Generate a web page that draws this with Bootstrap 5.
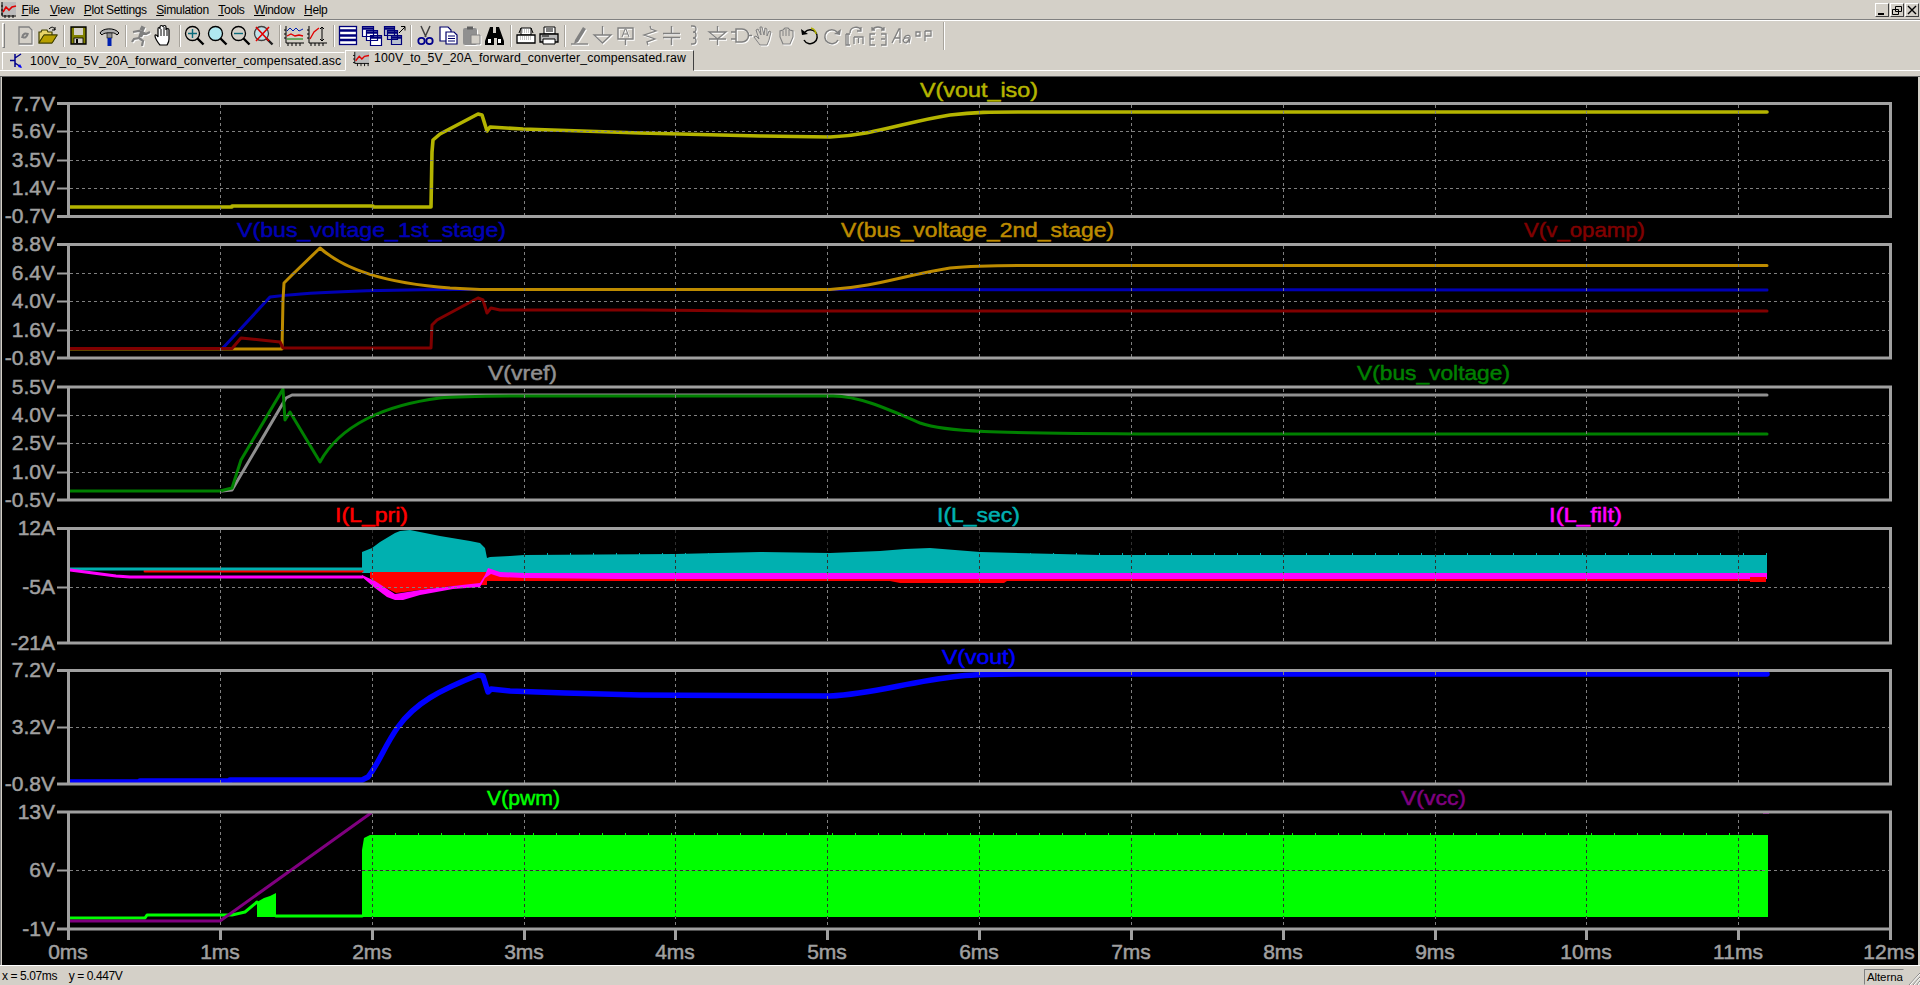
<!DOCTYPE html>
<html lang="en">
<head>
<meta charset="utf-8">
<title>LTspice</title>
<link rel="stylesheet" href="https://cdn.jsdelivr.net/npm/bootstrap@5.3.0/dist/css/bootstrap.min.css">
<style>
html,body{height:100%;overflow:hidden;background:#d4d0c8;font-family:"Liberation Sans",Arial,sans-serif;color:#000}
.lt-shell{height:985px}
.lt-menu{height:21px;border-bottom:1px solid #fff;box-shadow:inset 0 -1px 0 #808080;padding-left:0;font-size:12px;align-items:center;gap:9.5px;letter-spacing:-.35px;flex-wrap:nowrap}
.lt-menu .nav-link{padding:0;color:#000}
.lt-menu .nav-link.lt-first{margin-right:1px}
.lt-appicon{width:17px;height:17px;margin:0 -5px 0 0;flex:none}
.lt-winbtns{margin-left:auto;gap:1px;padding-right:1px;margin-top:-1px}
.lt-winbtn{width:14px;height:14px;background:#d4d0c8;border:1px solid;border-color:#fff #404040 #404040 #fff;display:block}
.lt-tools{height:29px;padding-left:2px;align-items:center;flex-wrap:nowrap}
.lt-grip{width:3px;height:25px;border:1px solid;border-color:#fff #808080 #808080 #fff;margin-right:8px}
.lt-ico{width:23px;height:23px;flex:none;display:block}
.lt-sep{width:1px;height:22px;background:#a8a49c;box-shadow:1px 0 0 #fff;flex:none;margin:0 3.5px}
.lt-sep-end{margin-left:7px;height:28px}
.dis{filter:drop-shadow(1px 1px 0 #fff)}
.lt-tabs{height:21px;border-bottom:1px solid #fff;padding-left:2px;font-size:12.3px;letter-spacing:.12px;flex-wrap:nowrap;align-items:flex-end}
.lt-tab{height:18px;width:343px;display:flex;align-items:center;gap:4px;padding-left:2px;color:#000;border:1px solid;border-color:#fff #d4d0c8 transparent #fff;white-space:nowrap;overflow:hidden}
.lt-tab.on{height:21px;width:349px;border-color:#fff #404040 #d4d0c8 #fff;margin-bottom:-1px;background:#d4d0c8;padding-bottom:4px}
.lt-gap{height:6px;border-bottom:1px solid #606060}
.lt-plotwrap{height:888px;padding-left:2px;padding-right:2px;background:#d4d0c8;box-shadow:inset 1px 0 0 #808080}
.lt-plot{display:block;width:1916px;height:888px;background:#000;font-family:"Liberation Sans",Arial,sans-serif}
.lt-plot text{font-size:21px;stroke-width:.5px}
.ya text{text-anchor:end;fill:#a0a0a0;stroke:#a0a0a0}
.xa text{text-anchor:middle;fill:#a0a0a0;stroke:#a0a0a0;font-size:21px}
.grid{fill:none;stroke:#808080;stroke-width:1;stroke-dasharray:3 3;shape-rendering:crispEdges}
.griddark{fill:none;stroke:#303030;stroke-width:1;stroke-dasharray:3 3;shape-rendering:crispEdges}
.tr{fill:none;stroke-width:3;stroke-linejoin:round;stroke-linecap:round}
.tr-y{stroke-width:3.6}
.tr-b{stroke-width:5.5}
.tr-teeth{fill:none;stroke-width:2;stroke-dasharray:1 22}
.lt-status{height:20px;border-top:1px solid #fff;margin-top:0;font-size:12px;letter-spacing:-.4px;white-space:pre;align-items:center;padding-left:2px;position:relative}
.lt-pane{width:40px;height:16px;margin-left:auto;margin-right:16px;margin-top:3px;border:1px solid;border-color:#808080 #d4d0c8 #d4d0c8 #808080;line-height:15px;padding-left:2px;overflow:hidden;font-size:11.5px;letter-spacing:-.1px}
.lt-resize{position:absolute;right:0;bottom:0;width:12px;height:14px}
</style>
</head>
<body>
<div class="lt-shell d-flex flex-column">

<nav class="nav lt-menu d-flex">
 <svg class="lt-appicon" viewBox="0 0 17 17"><rect x="2" y="0" width="14" height="13" fill="#bbb"/><path d="M2 0v14h14M1 4h2M1 8h2M1 12h2M5 13v3M9 13v3M13 13v3" stroke="#000" fill="none"/><path d="M3 10l3-5 3 3 3-3 4-1" stroke="#e00000" stroke-width="1.6" fill="none"/></svg>
 <a class="nav-link lt-first" href="#"><u>F</u>ile</a>
 <a class="nav-link" href="#"><u>V</u>iew</a>
 <a class="nav-link" href="#"><u>P</u>lot Settings</a>
 <a class="nav-link" href="#"><u>S</u>imulation</a>
 <a class="nav-link" href="#"><u>T</u>ools</a>
 <a class="nav-link" href="#"><u>W</u>indow</a>
 <a class="nav-link" href="#"><u>H</u>elp</a>
 <div class="d-flex lt-winbtns">
  <span class="lt-winbtn"><svg viewBox="0 0 12 12" width="12" height="12" class="d-block"><path d="M2 10h6" stroke="#000" stroke-width="2"/></svg></span>
  <span class="lt-winbtn"><svg viewBox="0 0 12 12" width="12" height="12" class="d-block"><path d="M4.5 2.5h6v5h-6zM1.5 5.5h6v5h-6z" stroke="#000" fill="#d4d0c8"/></svg></span>
  <span class="lt-winbtn"><svg viewBox="0 0 12 12" width="12" height="12" class="d-block"><path d="M2 2l8 8M10 2l-8 8" stroke="#000" stroke-width="1.4"/></svg></span>
 </div>
</nav>

<div class="btn-toolbar lt-tools" role="toolbar">
 <span class="lt-grip"></span>
 <svg class="lt-ico" viewBox="0 0 23 23"><path class="dis" d="M6 3h10l3 3v14H6z" fill="#d4d0c8" stroke="#808080" stroke-width="1.3"/><path d="M9 14c1-5 4-5 5-4M15 9c-1 5-4 5-5 4" stroke="#808080" stroke-width="2" fill="none"/></svg>
 <svg class="lt-ico" viewBox="0 0 23 23"><path d="M3 19V8h2l1-2h5l1 2h4v3H8L3 19h13l5-8H8" fill="#e8d468" stroke="#404000" stroke-width="1.2"/><path d="M3 19l5-8h13l-5 8z" fill="#b8a000" stroke="#404000"/><path d="M13 5c3-3 5-2 6 1M19 3v3h-3" stroke="#000" fill="none"/></svg>
 <span class="lt-sep"></span>
 <svg class="lt-ico" viewBox="0 0 23 23"><path d="M4 3h15v17H4z" fill="#808000" stroke="#000" stroke-width="1.3"/><rect x="7" y="4" width="9" height="7" fill="#d4d0c8"/><rect x="7" y="14" width="9" height="5.5" fill="#d4d0c8" stroke="#000" stroke-width=".8"/><rect x="9" y="15" width="2" height="4" fill="#000"/></svg>
 <span class="lt-sep"></span>
 <svg class="lt-ico" viewBox="0 0 23 23"><path d="M2 9c2-5 15-6 19 0l-2 2c-3-3-5-2-6-2H9C6 9 5 10 4 11z" fill="#b0b0b0" stroke="#000"/><rect x="9" y="9" width="5" height="5" fill="#909090" stroke="#000" stroke-width=".6"/><rect x="9.5" y="14" width="4" height="8" fill="#0020b0"/></svg>
 <span class="lt-sep"></span>
 <svg class="lt-ico dis" viewBox="0 0 23 23"><path d="M13 3l2 1-1 2-2-1zM4 8l6-1 3 1 4 2 4-2M12 8l-2 6-5 1-2 3M10 14l4 3-1 5M14 9l-2 4" stroke="#808080" stroke-width="2.2" fill="none"/></svg>
 <svg class="lt-ico" viewBox="0 0 23 23"><path d="M8 21c-2-2-5-7-5-9s2-1 3 1V5c0-2 2-2 2 0V3c0-2 3-2 3 0v0c0-2 3-2 3 0v3c0-2 3-2 3 0v9c0 3-1 4-2 6z" fill="#fff" stroke="#000" stroke-width="1.2"/><path d="M9 5v7M12 3v9M15 5v7" stroke="#000"/></svg>
 <span class="lt-sep"></span>
 <svg class="lt-ico" viewBox="0 0 23 23"><circle cx="9.5" cy="9.5" r="7" fill="none" stroke="#000" stroke-width="1.3"/><path d="M5 9.5h9M9.5 5v9" stroke="#0a6a7a" stroke-width="1.4"/><path d="M14.5 14.5l6 6" stroke="#000" stroke-width="2.4"/></svg>
 <svg class="lt-ico" viewBox="0 0 23 23"><circle cx="9.5" cy="9.5" r="7" fill="#b0e8f0" stroke="#000" stroke-width="1.3"/><path d="M14.5 14.5l6 6" stroke="#000" stroke-width="2.4"/></svg>
 <svg class="lt-ico" viewBox="0 0 23 23"><circle cx="9.5" cy="9.5" r="7" fill="none" stroke="#000" stroke-width="1.3"/><path d="M5 9.5h9" stroke="#0a6a7a" stroke-width="1.4"/><path d="M14.5 14.5l6 6" stroke="#000" stroke-width="2.4"/></svg>
 <svg class="lt-ico" viewBox="0 0 23 23"><circle cx="9.5" cy="9.5" r="7" fill="#c0e0e8" stroke="#404040" stroke-width="1.3"/><path d="M14.5 14.5l6 6" stroke="#202020" stroke-width="2.4"/><path d="M4 3l13 14M17 3L4 17" stroke="#e00000" stroke-width="1.6"/></svg>
 <span class="lt-sep"></span>
 <svg class="lt-ico" viewBox="0 0 23 23"><path d="M3 2v17h18M1 6h2M1 10h2M1 14h2M5 19v3M9 19v3M13 19v3M17 19v3" stroke="#000" fill="none"/><path d="M4 7l3-3 3 3 3-3 3 3 4-2" stroke="#0020b0" fill="none"/><path d="M4 12l4-2 4 2 4-1 4 1" stroke="#e00000" stroke-width="1.3" fill="none"/><path d="M4 15h16" stroke="#008000"/></svg>
 <svg class="lt-ico" viewBox="0 0 23 23"><path d="M3 2v17h18M1 6h2M1 10h2M1 14h2M5 19v3M9 19v3M13 19v3M17 19v3" stroke="#000" fill="none"/><path d="M4 15l4-7 5-4" stroke="#e00000" stroke-width="1.3" fill="none"/><path d="M16 3v14M14 5l2-2 2 2M14 15l2 2 2-2" stroke="#000" fill="none"/></svg>
 <span class="lt-sep"></span>
 <svg class="lt-ico" viewBox="0 0 23 23"><rect x="2.5" y="2.5" width="17" height="18" fill="#fff" stroke="#00007a" stroke-width="1.3"/><path d="M2 6.5h18M2 11.5h18M2 16h18" stroke="#00007a" stroke-width="2.6"/></svg>
 <svg class="lt-ico" viewBox="0 0 23 23"><path d="M2.5 2.5h11v10h-11zM6.5 6.5h11v10h-11zM10.5 11.5h11v10h-11z" fill="#fff" stroke="#00007a" stroke-width="1.2"/><path d="M2 4.5h12M6 8.5h12M10 13.5h12" stroke="#00007a" stroke-width="2.4"/></svg>
 <svg class="lt-ico" viewBox="0 0 23 23"><path d="M1.5 2.5h10v9h-10zM4.5 6.5h10v9h-10zM8.5 11.5h10v9h-10z" fill="#b8c0d0" stroke="#00007a" stroke-width="1.2"/><path d="M1 4.5h11M4 8.5h11M8 13.5h11" stroke="#00007a" stroke-width="2.4"/><path d="M16 9l6-6M18 2.5h4v4" stroke="#000" fill="none"/></svg>
 <span class="lt-sep"></span>
 <svg class="lt-ico" viewBox="0 0 23 23"><path d="M7 2l5 11M16 2l-5 11" stroke="#404040" stroke-width="1.5"/><circle cx="7.5" cy="17" r="3.2" fill="none" stroke="#00008a" stroke-width="1.8"/><circle cx="15.5" cy="17" r="3.2" fill="none" stroke="#00008a" stroke-width="1.8"/></svg>
 <svg class="lt-ico" viewBox="0 0 23 23"><path d="M3 3h8l3 3v11H3z" fill="#fff" stroke="#00006a" stroke-width="1.2"/><path d="M9 8h8l3 3v9H9z" fill="#fff" stroke="#00006a" stroke-width="1.2"/><path d="M11 12h7M11 14.5h7M11 17h7" stroke="#00006a"/></svg>
 <svg class="lt-ico dis" viewBox="0 0 23 23"><rect x="3" y="4" width="14" height="17" rx="2" fill="#909090"/><rect x="7" y="2.5" width="6" height="3" fill="#606060"/><path d="M11 11h9v9h-9z" fill="#d4d0c8" stroke="#808080"/></svg>
 <svg class="lt-ico" viewBox="0 0 23 23"><path d="M7 3h3v6h3V3h3l5 14v4h-7v-7h-3v7H2v-4z" fill="#000"/><path d="M5 15h3v4H5zM15 15h3v4h-3z" fill="#fff"/></svg>
 <span class="lt-sep"></span>
 <svg class="lt-ico" viewBox="0 0 23 23"><path d="M7 4h10v7H7z" fill="#fff" stroke="#000"/><path d="M3 11h18v8H3z" fill="#fff" stroke="#000" stroke-width="1.3"/><path d="M5 9l2-5M19 9l-2-5" stroke="#000"/><path d="M8 6h8M8 8h8M6 13h12M6 15h12" stroke="#909090" stroke-dasharray="1 1"/></svg>
 <svg class="lt-ico" viewBox="0 0 23 23"><path d="M7 3h11v7H7z" fill="#fff" stroke="#000"/><path d="M3 10h18v8H3z" fill="#b8b8b8" stroke="#000" stroke-width="1.3"/><path d="M6 15h12v5H6z" fill="#fff" stroke="#000"/><path d="M9 5h7M9 7h7" stroke="#000"/><path d="M5 12h7" stroke="#000"/></svg>
 <span class="lt-sep"></span>
 <svg class="lt-ico dis" viewBox="0 0 23 23"><path d="M7 16L15 3l3 2-8 13-4 2z" fill="#808080"/><path d="M3 20h17" stroke="#808080" stroke-width="1.4"/></svg>
 <svg class="lt-ico dis" viewBox="0 0 23 23"><path d="M11.5 2v9M3 11h17l-8.5 8z" fill="none" stroke="#808080" stroke-width="1.3"/></svg>
 <svg class="lt-ico dis" viewBox="0 0 23 23"><path d="M4 4h15v11H4zM11.5 15v6" fill="none" stroke="#808080" stroke-width="1.4"/><path d="M8 13l3-8h1l3 8M9 10h5" fill="none" stroke="#808080"/></svg>
 <svg class="lt-ico dis" viewBox="0 0 23 23"><path d="M13 2l1 3 5 2-12 4 11 4-8 3 1 3" fill="none" stroke="#808080" stroke-width="1.3"/></svg>
 <svg class="lt-ico dis" viewBox="0 0 23 23"><path d="M11.5 2v7M3 9.5h17M3 13.5h17M11.5 14v7" fill="none" stroke="#808080" stroke-width="1.4"/></svg>
 <svg class="lt-ico dis" viewBox="0 0 23 23"><path d="M8 2h2c4 0 4 6 0 6 4 0 4 6 0 6 4 0 4 6 0 6H8" fill="none" stroke="#808080" stroke-width="1.3"/></svg>
 <svg class="lt-ico dis" viewBox="0 0 23 23"><path d="M11.5 2v6M3 8h17l-8.5 7zM3 15h17M11.5 15v6" fill="none" stroke="#808080" stroke-width="1.3"/></svg>
 <svg class="lt-ico dis" viewBox="0 0 23 23"><path d="M7 5h6a6 6 0 010 13H7zM2 8h5M2 15h5M19 11.5h4" fill="none" stroke="#808080" stroke-width="1.5"/></svg>
 <svg class="lt-ico dis" viewBox="0 0 23 23"><path d="M8 21l-6-8 2-1 3 3-3-9 2-1 3 6-1-8h2l2 8 1-7 2 1v7l2-5 2 1-2 8-2 5z" fill="#d4d0c8" stroke="#808080"/></svg>
 <svg class="lt-ico dis" viewBox="0 0 23 23"><path d="M8 20l-3-7V7l3-1 2-2h3l2 2 3 1v6l-3 7z" fill="#d4d0c8" stroke="#808080" stroke-width="1.1"/><path d="M8 7v5M11 5v7M14 6v6" stroke="#808080"/></svg>
 <svg class="lt-ico" viewBox="0 0 23 23"><path d="M7 8a7 7 0 11-1 8" fill="none" stroke="#000" stroke-width="1.5"/><path d="M3 5l1 6 6-1z" fill="#000"/><path d="M13 4a7 7 0 015 6" stroke="#b0b000" fill="none" stroke-width="1.5"/></svg>
 <svg class="lt-ico dis" viewBox="0 0 23 23"><path d="M16 8a7 7 0 101 8" fill="none" stroke="#808080" stroke-width="1.5"/><path d="M20 5l-1 6-6-1z" fill="#808080"/></svg>
 <svg class="lt-ico dis" viewBox="0 0 23 23"><path d="M6 9c0-7 9-7 11-3M17 3v4h-4M2 10h4M2 10v11h4M4 10v11M10 13v7M10 13h9v7M14.5 14v5" fill="none" stroke="#808080" stroke-width="1.3"/></svg>
 <svg class="lt-ico dis" viewBox="0 0 23 23"><path d="M5 6c3-4 9-4 12 0M5 3v3h3M17 3v3h-3M8 10H3v11h5M3 15h4M14 10h5v11h-5M18 15h-4" fill="none" stroke="#808080" stroke-width="1.3"/></svg>
 <svg class="lt-ico dis" viewBox="0 0 23 23"><path d="M2 19l7-14h1v14M5 14h5M14 14c2-4 7-3 6 0l-1 5M19 14c-5-1-7 2-5 4s4 0 5-3" fill="none" stroke="#808080" stroke-width="1.3"/></svg>
 <svg class="lt-ico dis" viewBox="0 0 23 23"><path d="M3 8h4v4H3zM12 7h6v5h-6M12 7v10" fill="none" stroke="#808080" stroke-width="1.3"/></svg>
 <span class="lt-sep lt-sep-end"></span>
</div>

<div class="nav lt-tabs d-flex">
 <a class="lt-tab text-decoration-none" href="#"><svg width="21" height="16" viewBox="0 0 21 16" class="flex-shrink-0"><path d="M10 1v13M5 7.5h5M10 5l6-4M10 10l6 4" stroke="#00008a" stroke-width="1.5" fill="none"/><path d="M17 15l-4-1 2-3z" fill="#0000ff"/></svg>100V_to_5V_20A_forward_converter_compensated.asc</a>
 <a class="lt-tab on text-decoration-none" href="#"><svg width="18" height="16" viewBox="0 0 20 18" class="ms-1 flex-shrink-0"><rect x="3" y="1" width="16" height="13" fill="#bbb"/><path d="M3 1v13h16M1 5h2M1 9h2M1 13h2M6 14v3M10 14v3M14 14v3M18 14v3" stroke="#000" fill="none"/><path d="M4 11l4-5 3 3 3-3 5-1" stroke="#e00000" stroke-width="1.6" fill="none"/></svg><span>100V_to_5V_20A_forward_converter_compensated.raw</span></a>
</div>
<div class="lt-gap"></div>

<div class="lt-plotwrap">
<svg class="lt-plot" viewBox="2 77 1916 888" xmlns="http://www.w3.org/2000/svg">
 <defs>
  <path id="vg" d="M220.5 0V120M372.5 0V120M524.5 0V120M675.5 0V120M827.5 0V120M979.5 0V120M1131.5 0V120M1283.5 0V120M1435.5 0V120M1586.5 0V120M1738.5 0V120"/>
 </defs>

 <!-- traces -->
 <path class="tr tr-y" stroke="#b4b400" d="M70 207H232V206H373V207H431L432 152L433 140L440 134L478 114L482 115L487 131L490 127L523 129L640 133L760 136L830 137C875 135 905 122 950 115C975 112 990 112 1020 112H1767"/>

 <path class="tr" stroke="#0000b4" d="M222 349L270 297C300 293 350 290 456 289.5L1767 290"/>
 <path class="tr" stroke="#bd8b00" d="M70 349H282L283 300L284 283L293 274L320 248C345 270 385 283 450 288L480 289.5L830 289.5C875 287 905 275 950 268C975 265.5 990 265.5 1020 265.5H1767"/>
 <path class="tr" stroke="#800000" d="M70 348.5H222L232 348.5L241 338L280 342L283 348H431L432 325L437 320L478 298L483 300L487 313L491 308L500 310H640L760 311H1767"/>

 <path class="tr" stroke="#909090" d="M222 491L232 490L286 398L292 395H1767"/>
 <path class="tr" stroke="#008000" d="M70 491H220L232 488L241 460L283 389L285 420L290 412L320 462C340 425 385 405 440 398C460 396 490 396 529 396H833C860 396 890 410 920 423C945 432 985 433 1163 434H1767"/>

 <path fill="#00b0b0" d="M362 573V552L372 548L380 542L395 533L400 531L410 530L420 532L440 536L470 541L480 543L485 548L487 558L490 557L510 556L524 555L675 554L760 552L830 553L880 551L905 549L930 548L980 552L1100 555L1767 555V573Z"/>
 <path class="tr-teeth" stroke="#00b0b0" d="M524 554H1767"/>
 <path fill="#ff0000" d="M370 572H487V585L453 586L420 590L396 593L380 585L370 578ZM487 574H1765V581H487Z"/>
 <path fill="#ff0000" d="M880 579H1010L1004 583H900Z"/>
 <path fill="#ff00ff" d="M362 575L375 581L395 594L420 590L453 586L480 583L485 575L488 568L500 572L524 573H1767V579H620L524 578L500 577L491 574L485 578L480 587L453 589L420 595L403 600H395L387 597L375 588L362 577Z"/>
 <path fill="#ff0000" d="M1750 577h16v5h-16z"/>
 <path class="tr" stroke="#ff0000" d="M145 571H362"/>
 <path class="tr" stroke="#00b0b0" d="M70 569H362"/>
 <path class="tr" stroke="#ff00ff" d="M70 570L116 576L130 577H362"/>

 <path class="tr tr-b" stroke="#0000ff" d="M70 782H140V781H230V780H362L368 777C378 765 385 745 398 727C415 703 440 690 478 675L483 676L488 692L491 689L510 691L565 693L640 695L830 696C875 694 905 682 960 676C980 674 1000 674 1020 674H1767"/>

 <path fill="#00ff00" d="M362 917V850L364 838L370 835H1768V917Z"/>
 <path class="tr-teeth" stroke="#00ff00" d="M372 834H1766"/>
 <path class="tr" stroke="#00ff00" d="M70 918H145L147 915H232L245 912L257 902"/>
 <path fill="#00ff00" d="M257 917V902L264 898L270 896L276 893V917Z"/>
 <path class="tr" stroke="#00ff00" d="M276 916H362"/>
 <path class="tr" stroke="#800080" d="M70 921H220L371 813"/>
 <rect x="1763" y="811" width="6" height="3" fill="#800080"/>

 <!-- grid -->
 <svg x="0" y="105" width="1920" height="111"><use href="#vg" class="grid"/></svg>
 <svg x="0" y="246" width="1920" height="111"><use href="#vg" class="grid"/></svg>
 <svg x="0" y="389" width="1920" height="110"><use href="#vg" class="grid"/></svg>
 <svg x="0" y="530" width="1920" height="112"><use href="#vg" class="grid"/></svg>
 <svg x="0" y="672" width="1920" height="111"><use href="#vg" class="grid"/></svg>
 <svg x="0" y="814" width="1920" height="114"><use href="#vg" class="grid"/></svg>
 <path class="grid" d="M70 131.5H1889M70 160.5H1889M70 188.5H1889M70 273.5H1889M70 301.5H1889M70 330.5H1889M70 415.5H1889M70 443.5H1889M70 472.5H1889M70 587.5H1889M70 727.5H1889M70 870.5H1889"/>
 <svg x="362" y="834" width="1404" height="83"><use href="#vg" x="-362" y="-20" class="griddark"/></svg>
 <svg x="362" y="530" width="1404" height="43"><use href="#vg" x="-362" class="griddark"/></svg>
 <path class="griddark" d="M362 870.5H1762"/>

 <!-- frames -->
 <path fill="none" stroke="#a0a0a0" stroke-width="3" d="M57 103.5H1890.5V216.5H57M68.5 103.5V216.5M57 244.5H1890.5V358H57M68.5 244.5V358M57 387H1890.5V500H57M68.5 387V500M57 528.5H1890.5V643H57M68.5 528.5V643M57 670.5H1890.5V784H57M68.5 670.5V784M57 812H1890.5V929H57M68.5 812V929"/>
 <path fill="none" stroke="#a0a0a0" stroke-width="2" d="M57 131.5H68M57 160.5H68M57 188.5H68M57 273.5H68M57 301.5H68M57 330.5H68M57 415.5H68M57 443.5H68M57 472.5H68M57 587.5H68M57 727.5H68M57 870.5H68"/>
 <path fill="none" stroke="#a0a0a0" stroke-width="3" d="M68.5 929V940M220.5 929V940M372.5 929V940M524.5 929V940M675.5 929V940M827.5 929V940M979.5 929V940M1131.5 929V940M1283.5 929V940M1435.5 929V940M1586.5 929V940M1738.5 929V940M1890.5 929V940"/>

 <!-- y axis labels -->
 <g class="ya">
  <text x="55" y="111">7.7V</text><text x="55" y="138">5.6V</text><text x="55" y="167">3.5V</text><text x="55" y="195">1.4V</text><text x="55" y="223">-0.7V</text>
  <text x="55" y="251">8.8V</text><text x="55" y="280">6.4V</text><text x="55" y="308">4.0V</text><text x="55" y="337">1.6V</text><text x="55" y="365">-0.8V</text>
  <text x="55" y="394">5.5V</text><text x="55" y="422">4.0V</text><text x="55" y="450">2.5V</text><text x="55" y="479">1.0V</text><text x="55" y="507">-0.5V</text>
  <text x="55" y="535">12A</text><text x="55" y="594">-5A</text><text x="55" y="650">-21A</text>
  <text x="55" y="677">7.2V</text><text x="55" y="734">3.2V</text><text x="55" y="791">-0.8V</text>
  <text x="55" y="819">13V</text><text x="55" y="877">6V</text><text x="55" y="936">-1V</text>
 </g>
 <!-- x axis labels -->
 <g class="xa">
  <text x="68" y="959">0ms</text><text x="220" y="959">1ms</text><text x="372" y="959">2ms</text><text x="524" y="959">3ms</text><text x="675" y="959">4ms</text><text x="827" y="959">5ms</text><text x="979" y="959">6ms</text><text x="1131" y="959">7ms</text><text x="1283" y="959">8ms</text><text x="1435" y="959">9ms</text><text x="1586" y="959">10ms</text><text x="1738" y="959">11ms</text><text x="1889" y="959">12ms</text>
 </g>
 <!-- titles -->
 <text x="920" y="97" fill="#b4b400" stroke="#b4b400" textLength="118" lengthAdjust="spacingAndGlyphs">V(vout_iso)</text>
 <text x="237" y="237" fill="#0000b4" stroke="#0000b4" textLength="269" lengthAdjust="spacingAndGlyphs">V(bus_voltage_1st_stage)</text>
 <text x="841" y="237" fill="#bd8b00" stroke="#bd8b00" textLength="273" lengthAdjust="spacingAndGlyphs">V(bus_voltage_2nd_stage)</text>
 <text x="1524" y="237" fill="#800000" stroke="#800000" textLength="121" lengthAdjust="spacingAndGlyphs">V(v_opamp)</text>
 <text x="488" y="380" fill="#909090" stroke="#909090" textLength="69" lengthAdjust="spacingAndGlyphs">V(vref)</text>
 <text x="1357" y="380" fill="#008000" stroke="#008000" textLength="153" lengthAdjust="spacingAndGlyphs">V(bus_voltage)</text>
 <text x="335" y="522" fill="#ff0000" stroke="#ff0000" textLength="73" lengthAdjust="spacingAndGlyphs">I(L_pri)</text>
 <text x="937" y="522" fill="#00b0b0" stroke="#00b0b0" textLength="83" lengthAdjust="spacingAndGlyphs">I(L_sec)</text>
 <text x="1549" y="522" fill="#ff00ff" stroke="#ff00ff" textLength="73" lengthAdjust="spacingAndGlyphs">I(L_filt)</text>
 <text x="942" y="664" fill="#0000ff" stroke="#0000ff" textLength="74" lengthAdjust="spacingAndGlyphs">V(vout)</text>
 <text x="487" y="805" fill="#00ff00" stroke="#00ff00" textLength="73" lengthAdjust="spacingAndGlyphs">V(pwm)</text>
 <text x="1401" y="805" fill="#800080" stroke="#800080" textLength="65" lengthAdjust="spacingAndGlyphs">V(vcc)</text>
</svg>
</div>

<div class="d-flex lt-status">
 <span>x = 5.07ms    y = 0.447V</span>
 <span class="lt-pane">Alterna</span>
 <svg class="lt-resize" viewBox="0 0 12 14"><path d="M12 2L1 14M12 6l-7 8M12 10l-3 4" stroke="#808080" fill="none"/><path d="M12 3L2 14M12 7l-6 7M12 11l-2 3" stroke="#fff" fill="none"/></svg>
</div>

</div>
<script src="https://cdn.jsdelivr.net/npm/bootstrap@5.3.0/dist/js/bootstrap.bundle.min.js"></script>
</body>
</html>
